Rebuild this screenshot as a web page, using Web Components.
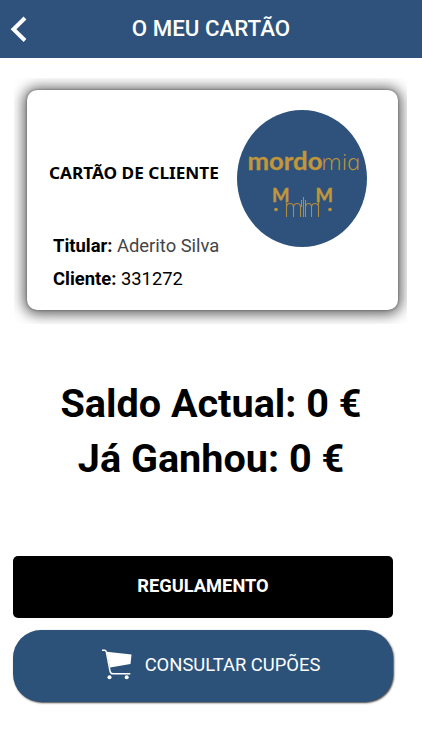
<!DOCTYPE html>
<html lang="pt">
<head>
  <meta charset="utf-8">
  <meta name="viewport" content="width=device-width, initial-scale=1">
  <title>O meu cartão</title>
  <style>
    body {
      margin: 0;
      background: #fff;
      color: #000;
      font-family: Roboto, "Liberation Sans", sans-serif;
    }
  </style>
</head>
<body>
  <card-page></card-page>

  <script>
    // Attaches an open shadow root with the given markup
    class BaseElement extends HTMLElement {
      constructor() {
        super()
        this.attachShadow({ mode: 'open' })
        this.shadowRoot.innerHTML = this.template()
      }
    }

    class AppHeader extends BaseElement {
      template() {
        return `
          <style>
            :host {
              display: grid;
              grid-template-columns: 50px 1fr 50px;
              align-items: center;
              height: 58px;
              box-sizing: border-box;
              background: #2e527b;
              color: #fff;
            }

            svg {
              display: block;
              margin-left: 10px;
            }

            h1 {
              margin: 0 0 2px;
              font-size: 22.3px;
              line-height: 26px;
              font-weight: 500;
              text-align: center;
              white-space: nowrap;
            }
          </style>
          <svg width="18" height="28" viewBox="0 0 18 28" fill="none" stroke="#fff" stroke-width="4">
            <path d="M15 3 L3.5 14.2 L15 25.5" />
          </svg>
          <h1><slot></slot></h1>
        `
      }
    }

    class BrandLogo extends BaseElement {
      template() {
        return `
          <style>
            :host {
              display: block;
              width: 130px;
              height: 137px;
            }

            svg {
              display: block;
            }

            text {
              fill: #c2963a;
              font-family: Lato, sans-serif;
            }

            .bold {
              font-weight: 700;
              font-size: 24px;
              stroke: #c2963a;
              stroke-width: 0.3;
            }

            /* the italic has a one-storey a, the skew sets it upright */
            .thin {
              font-family: "Open Sans", sans-serif;
              font-style: italic;
              font-weight: 300;
              font-size: 22px;
            }

            .initial {
              font-weight: 700;
              font-size: 19px;
              stroke: #c2963a;
              stroke-width: 0.4;
            }
          </style>
          <svg width="130" height="137" viewBox="0 0 130 137">
            <ellipse cx="65" cy="68.5" rx="65" ry="68.5" fill="#2e527b" />
            <text class="bold" x="10.5" y="59.5" textLength="75" lengthAdjust="spacingAndGlyphs">mordo</text>
            <text class="thin" transform="translate(85.5 59.5) skewX(12)" textLength="39" lengthAdjust="spacingAndGlyphs">mia</text>
            <text class="initial" x="35" y="91.5" textLength="17.5" lengthAdjust="spacingAndGlyphs">M</text>
            <text class="initial" x="78.5" y="91.5" textLength="17.5" lengthAdjust="spacingAndGlyphs">M</text>
            <g fill="none" stroke="#b08c41" stroke-width="1.1">
              <path d="M49.5 107 V91 M49.5 97 Q50 93.5 53 93.5 Q56.5 93.5 56.5 97 V107 M56.5 97 Q57 93.5 60 93.5 Q63.5 93.5 63.5 97 V107" />
              <path d="M64.5 97 V90 M66.5 107 V87 M68.5 97 V90 M68.5 107 V97 Q69 93.5 71.5 93.5 Q74.5 93.5 74.5 97 V107 M74.5 97 Q75 93.5 78 93.5 Q81.5 93.5 81.5 97 V107 M81.5 97 V91" />
            </g>
            <circle cx="39" cy="99.5" r="1.8" fill="#c2963a" />
            <circle cx="93" cy="99.5" r="1.8" fill="#c2963a" />
          </svg>
        `
      }
    }

    class ClientCard extends BaseElement {
      template() {
        return `
          <style>
            /* clips the shadow on the top and right sides */
            :host {
              display: block;
              box-sizing: border-box;
              width: 393px;
              height: 246px;
              padding: 12px 9px 14px 13px;
              overflow: hidden;
            }

            .card {
              display: grid;
              grid-template-columns: 210px 1fr;
              height: 220px;
              border-radius: 10px;
              background: #fff;
              box-shadow: 0 0 2px #555, 0 1px 14px 3px rgba(0, 0, 0, 0.65);
            }

            .info {
              padding-left: 22px;
            }

            h2 {
              margin: 71px 0 0;
              font-family: "Noto Sans", sans-serif;
              font-size: 16.3px;
              line-height: 24px;
              font-weight: 700;
              white-space: nowrap;
              transform: scaleX(1.057);
              transform-origin: left;
            }

            .rows {
              margin: 44px 0 0 4px;
            }

            brand-logo {
              margin-top: 19.5px;
            }
          </style>
          <div class="card">
            <div class="info">
              <h2>CARTÃO DE CLIENTE</h2>
              <div class="rows"><slot></slot></div>
            </div>
            <brand-logo></brand-logo>
          </div>
        `
      }
    }

    class CardField extends BaseElement {
      template() {
        return `
          <style>
            :host {
              display: block;
              font-size: 18.4px;
              line-height: 33px;
              white-space: nowrap;
            }

            b {
              font-weight: 700;
            }
          </style>
          <b><slot name="label"></slot></b> <slot></slot>
        `
      }
    }

    class BalanceLine extends BaseElement {
      template() {
        return `
          <style>
            :host {
              display: block;
              font-size: 39.6px;
              line-height: 55px;
              font-weight: 700;
              text-align: center;
              white-space: nowrap;
            }
          </style>
          <slot></slot>
        `
      }
    }

    class ActionButton extends BaseElement {
      template() {
        return `
          <style>
            :host {
              display: block;
            }

            button {
              display: flex;
              align-items: center;
              justify-content: center;
              gap: 13px;
              width: 380px;
              height: 62px;
              padding: 0 0 4px;
              border: 0;
              border-radius: 5px;
              background: #000;
              color: #fff;
              font: 700 18.3px Roboto, sans-serif;
              white-space: nowrap;
            }

            :host([rounded]) button {
              height: 72px;
              padding-left: 16px;
              border-radius: 28px;
              background: #2c5279;
              box-shadow: 1px 1px 2px rgba(0, 0, 0, 0.75);
              font-weight: 400;
              font-size: 18.4px;
            }
          </style>
          <button><slot name="icon"></slot><span><slot></slot></span></button>
        `
      }
    }

    class CartIcon extends BaseElement {
      template() {
        return `
          <style>
            :host {
              display: block;
            }

            svg {
              display: block;
            }
          </style>
          <svg width="30" height="31" viewBox="0 0 30 31" fill="#fff">
            <path d="M4.5 2.8 L29.5 5.5 L28.5 15 L8 18.5 Z" />
            <path d="M0 1.2 H2.5 Q4 1.2 4.3 2.8 L8 22 Q8.6 24.8 11 24.8 H28.3" fill="none" stroke="#fff" stroke-width="1.4" />
            <circle cx="7.5" cy="28.3" r="2" />
            <circle cx="24.7" cy="28.3" r="2" />
          </svg>
        `
      }
    }

    class CardPage extends BaseElement {
      template() {
        return `
          <style>
            :host {
              display: block;
              height: 750px;
              overflow: hidden;
            }

            client-card {
              margin: 20px 0 0 14px;
            }

            .balance {
              margin-top: 52px;
            }

            .actions {
              display: grid;
              gap: 12px;
              margin: 70px 0 0 13px;
            }

            .name {
              color: #444;
            }
          </style>
          <app-header>O MEU CARTÃO</app-header>
          <client-card>
            <card-field><span slot="label">Titular:</span><span class="name">Aderito Silva</span></card-field>
            <card-field><span slot="label">Cliente:</span>331272</card-field>
          </client-card>
          <div class="balance">
            <balance-line>Saldo Actual: 0 €</balance-line>
            <balance-line>Já Ganhou: 0 €</balance-line>
          </div>
          <div class="actions">
            <action-button>REGULAMENTO</action-button>
            <action-button rounded><cart-icon slot="icon"></cart-icon>CONSULTAR CUPÕES</action-button>
          </div>
        `
      }
    }

    customElements.define('app-header', AppHeader)
    customElements.define('brand-logo', BrandLogo)
    customElements.define('card-field', CardField)
    customElements.define('client-card', ClientCard)
    customElements.define('balance-line', BalanceLine)
    customElements.define('cart-icon', CartIcon)
    customElements.define('action-button', ActionButton)
    customElements.define('card-page', CardPage)
  </script>
</body>
</html>
